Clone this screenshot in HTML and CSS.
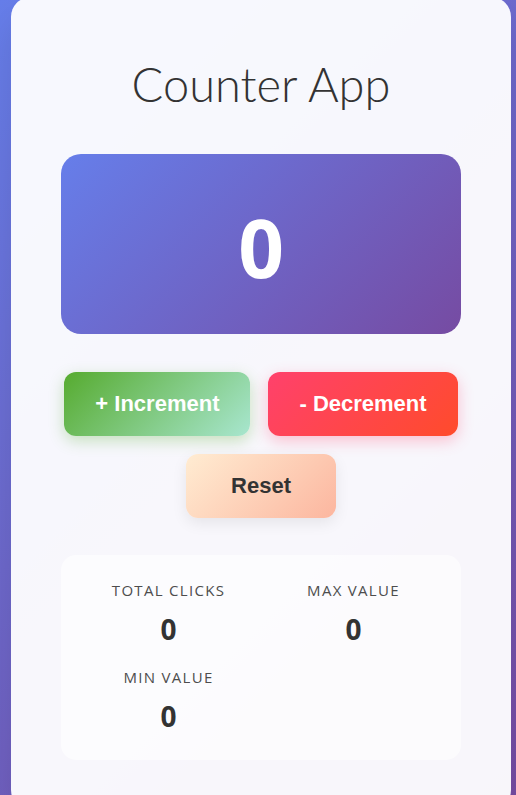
FILE: index.html
```html
<!DOCTYPE html>
<html lang="en">
<head>
<meta charset="utf-8">
<title>Counter App</title>
<link rel="stylesheet" href="styles.css">
</head>
<body>
  <div class="card">
    <h1 class="title">Counter App</h1>
    <div class="display"><span class="count">0</span></div>
    <div class="buttons">
      <button class="btn btn-inc">+ Increment</button>
      <button class="btn btn-dec">- Decrement</button>
      <button class="btn btn-reset">Reset</button>
    </div>
    <div class="stats">
      <div class="stat">
        <div class="stat-label">Total Clicks</div>
        <div class="stat-value">0</div>
      </div>
      <div class="stat">
        <div class="stat-label">Max Value</div>
        <div class="stat-value">0</div>
      </div>
      <div class="stat">
        <div class="stat-label">Min Value</div>
        <div class="stat-value">0</div>
      </div>
    </div>
  </div>
</body>
</html>
```

FILE: styles.css
```css
* {
  box-sizing: border-box;
}

html, body {
  margin: 0;
  padding: 0;
}

body {
  min-height: 100vh;
  padding: 0 5px 0 11px;
  background: linear-gradient(135deg, #667eea 0%, #764ba2 100%);
  font-family: "Open Sans", "Liberation Sans", sans-serif;
  overflow: hidden;
}

.card {
  width: 500px;
  margin: -3px auto 0;
  padding: 50px;
  background: rgba(255, 255, 255, 0.95);
  border-radius: 20px;
  box-shadow: 0 20px 40px rgba(0, 0, 0, 0.1);
  display: flex;
  flex-direction: column;
}

.title {
  margin: 8px 0 41px;
  font-family: "Lato", "Open Sans", sans-serif;
  font-weight: 300;
  font-size: 47px;
  line-height: 58px;
  color: #333;
  text-align: center;
}

.display {
  height: 180px;
  border-radius: 20px;
  background: linear-gradient(135deg, #667eea 0%, #764ba2 100%);
  display: flex;
  align-items: center;
  justify-content: center;
  margin-bottom: 38px;
  padding-top: 6px;
}

.count {
  font-family: "Open Sans", sans-serif;
  font-weight: 700;
  font-size: 80px;
  line-height: 1;
  color: #fff;
}

.buttons {
  display: flex;
  flex-wrap: wrap;
  justify-content: center;
  gap: 18px;
  margin-bottom: 37px;
}

.btn {
  height: 64px;
  padding: 0 31px;
  border: none;
  border-radius: 12px;
  font-family: "Liberation Sans", Arial, sans-serif;
  font-weight: 700;
  font-size: 22px;
  color: #fff;
  cursor: pointer;
}

.btn-inc {
  background: linear-gradient(135deg, #56ab2f 0%, #a8e6cf 100%);
  box-shadow: 0 5px 15px rgba(86, 171, 47, 0.3);
}

.btn-dec {
  background: linear-gradient(135deg, #ff416c 0%, #ff4b2b 100%);
  box-shadow: 0 5px 15px rgba(255, 65, 108, 0.3);
}

.btn-reset {
  min-width: 150px;
  background: linear-gradient(135deg, #ffecd2 0%, #fcb69f 100%);
  box-shadow: 0 5px 15px rgba(0, 0, 0, 0.08);
  color: #333;
}

.stats {
  display: grid;
  grid-template-columns: 1fr 1fr;
  column-gap: 20px;
  row-gap: 19px;
  padding: 25px;
  border-radius: 15px;
  background: rgba(255, 255, 255, 0.6);
}

.stat {
  text-align: center;
}

.stat-label {
  font-size: 15px;
  font-weight: 500;
  line-height: 20px;
  letter-spacing: 1.3px;
  text-transform: uppercase;
  color: #4d4d4d;
  margin-bottom: 10px;
}

.stat-value {
  font-size: 28px;
  line-height: 38px;
  font-weight: 700;
  color: #333;
}
```
